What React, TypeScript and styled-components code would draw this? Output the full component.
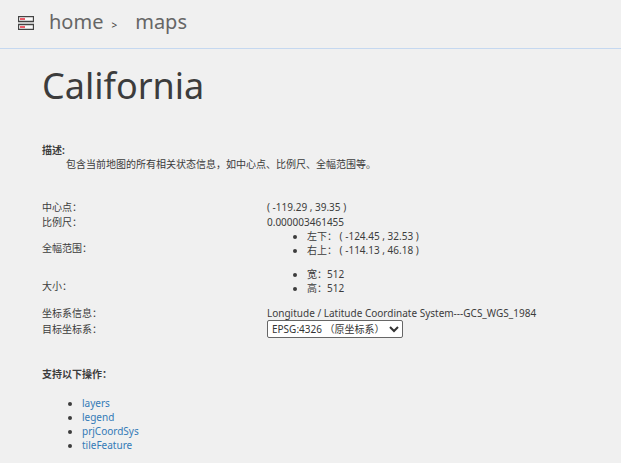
import React from "react";
import styled, { createGlobalStyle } from "styled-components";

const GlobalStyle = createGlobalStyle`
  * { box-sizing: border-box; }
  body {
    margin: 0;
    background: #f0f0f0;
    color: #3c3c3c;
    font-family: "Noto Sans", "Noto Sans CJK SC", sans-serif;
    font-size: 10px;
    line-height: 14px;
  }
`;

const Header = styled.header`
  display: flex;
  align-items: center;
  height: 49px;
  padding: 0 18px 2px;
  border-bottom: 1px solid #c5d8f0;
`;

const Crumbs = styled.nav`
  display: flex;
  align-items: baseline;
  margin-left: 15px;
  line-height: 28px;
`;

const Crumb = styled.a`
  color: #666;
  font-size: 20px;
  text-decoration: none;
`;

const Separator = styled.span`
  margin: 0 18px 0 8px;
  font-size: 10px;
`;

const Main = styled.main`
  padding: 11px 42px 0;
`;

const Title = styled.h1`
  margin: 0 0 31px;
  font-size: 36px;
  font-weight: 400;
  line-height: 52px;
`;

const Caption = styled.h2`
  margin: 0;
  font-size: 10px;
  font-weight: 700;
  line-height: 14px;
`;

const Description = styled.p`
  margin: 0 0 28px;
  padding-left: 24px;
`;

const InfoTable = styled.table`
  width: 100%;
  margin-bottom: 29px;
  border-collapse: collapse;
  table-layout: fixed;
`;

const Name = styled.th`
  width: 225px;
  padding: 0;
  font-weight: 400;
  text-align: left;
`;

const Value = styled.td`
  padding: 0;
  height: 15px;
`;

const List = styled.ul`
  margin: 0 0 10px;
  padding-left: 40px;
`;

const Operations = styled(List)`
  margin: 15px 0 0;
`;

const Link = styled.a`
  color: #337ab7;
  text-decoration: none;
`;

const Select = styled.select`
  display: block;
  width: 136px;
  height: 18px;
  padding: 0;
  border: 1px solid #666;
  border-radius: 2px;
  background: #fff;
  color: #333;
  font: inherit;
`;

const ServerIcon = () => (
  <svg width="16" height="14" viewBox="0 0 16 14" fill="none" aria-hidden="true">
    <path d="M.5 .5h15v5H.5zM.5 8.5h15v5H.5z" fill="#fafafa" stroke="#444" strokeWidth="1.3" />
    <path d="M2 3H7M2 11H7" stroke="#e8283a" strokeWidth="1.5" />
  </svg>
);

const operations = ["layers", "legend", "prjCoordSys", "tileFeature"];

export default function App() {
  return (
    <div lang="zh-CN">
      <GlobalStyle />
      <Header>
        <ServerIcon />
        <Crumbs>
          <Crumb href="#home">home</Crumb>
          <Separator>&gt;</Separator>
          <Crumb href="#maps">maps</Crumb>
        </Crumbs>
      </Header>
      <Main>
        <Title>California</Title>
        <Caption>描述:</Caption>
        <Description>包含当前地图的所有相关状态信息，如中心点、比例尺、全幅范围等。</Description>
        <InfoTable>
          <tbody>
            <tr><Name scope="row">中心点：</Name><Value>( -119.29 , 39.35 )</Value></tr>
            <tr><Name scope="row">比例尺：</Name><Value>0.000003461455</Value></tr>
            <tr>
              <Name scope="row">全幅范围：</Name>
              <Value><List><li>左下： ( -124.45 , 32.53 )</li><li>右上： ( -114.13 , 46.18 )</li></List></Value>
            </tr>
            <tr>
              <Name scope="row">大小：</Name>
              <Value><List><li>宽：512</li><li>高：512</li></List></Value>
            </tr>
            <tr><Name scope="row">坐标系信息：</Name><Value>Longitude / Latitude Coordinate System---GCS_WGS_1984</Value></tr>
            <tr>
              <Name scope="row"><label htmlFor="target">目标坐标系：</label></Name>
              <Value><Select id="target"><option>EPSG:4326 （原坐标系）</option></Select></Value>
            </tr>
          </tbody>
        </InfoTable>
        <Caption>支持以下操作：</Caption>
        <Operations>
          {operations.map((name) => (
            <li key={name}><Link href={`#${name}`}>{name}</Link></li>
          ))}
        </Operations>
      </Main>
    </div>
  );
}
